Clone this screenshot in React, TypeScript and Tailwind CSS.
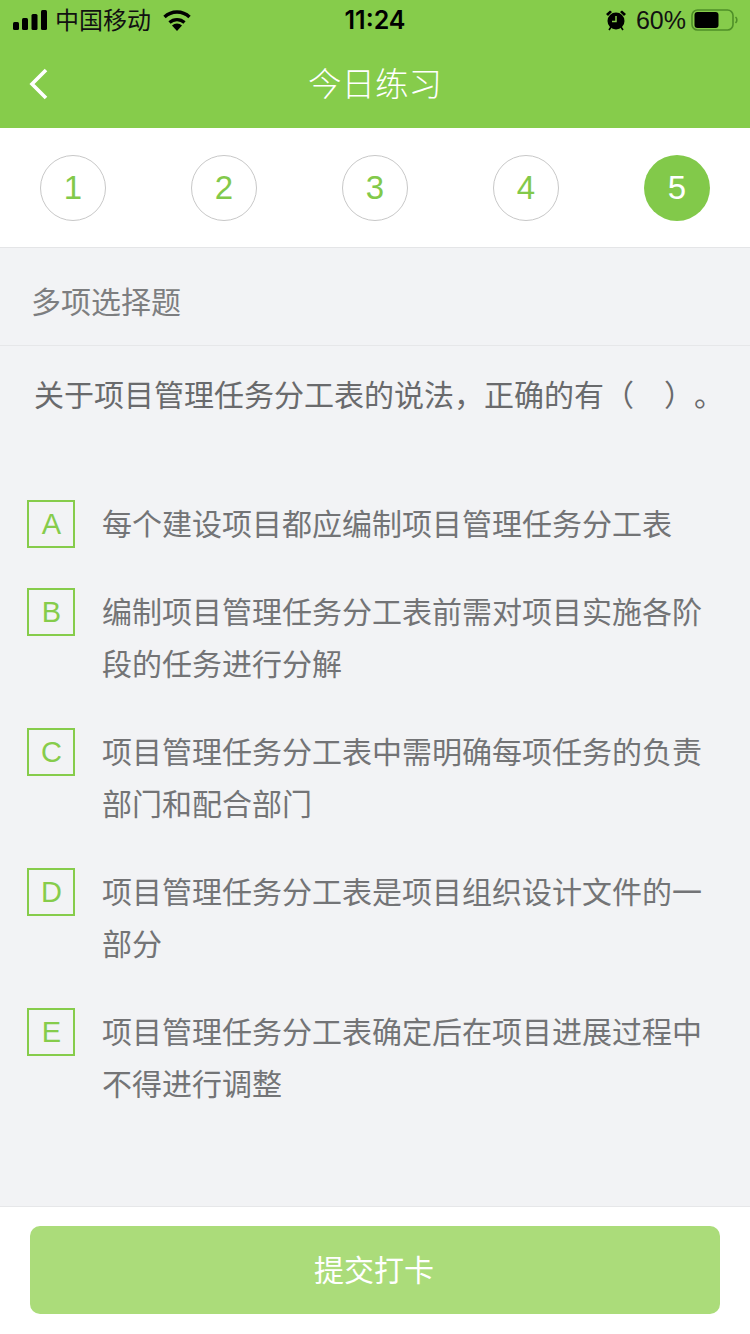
const font = { fontFamily: '"Noto Sans CJK SC", sans-serif' };

const steps = [1, 2, 3, 4, 5];

const options = [
  { key: 'A', lines: ['每个建设项目都应编制项目管理任务分工表'] },
  { key: 'B', lines: ['编制项目管理任务分工表前需对项目实施各阶', '段的任务进行分解'] },
  { key: 'C', lines: ['项目管理任务分工表中需明确每项任务的负责', '部门和配合部门'] },
  { key: 'D', lines: ['项目管理任务分工表是项目组织设计文件的一', '部分'] },
  { key: 'E', lines: ['项目管理任务分工表确定后在项目进展过程中', '不得进行调整'] },
];

function StatusBar() {
  return (
    <div className="h-10 flex items-center justify-between pl-[13px] pr-[12px] text-black relative">
      <div className="flex items-center">
        <svg width="34" height="20" viewBox="0 0 34 20">
          <rect x="0" y="12" width="6" height="8" rx="1.5" fill="#000" />
          <rect x="9" y="8" width="6" height="12" rx="1.5" fill="#000" />
          <rect x="18.5" y="4" width="6" height="16" rx="1.5" fill="#000" />
          <rect x="28" y="0" width="6" height="20" rx="1.5" fill="#000" />
        </svg>
        <span className="ml-[8px] text-[24px] leading-none text-[#111] -mt-[2px]">中国移动</span>
        <svg className="ml-[11px]" width="30" height="22" viewBox="0 0 30 22">
          <path d="M15 22 L10 16.5 A7.5 7.5 0 0 1 20 16.5 Z" fill="#000" />
          <path d="M7.5 13.5 A11 11 0 0 1 22.5 13.5" fill="none" stroke="#000" strokeWidth="3.2" />
          <path d="M2.5 8 A18 18 0 0 1 27.5 8" fill="none" stroke="#000" strokeWidth="3.4" />
        </svg>
      </div>
      <span
        className="absolute left-0 right-0 text-center text-[25px] font-semibold leading-none pointer-events-none"
        style={{ fontFamily: 'Inter, sans-serif' }}
      >
        11:24
      </span>
      <div className="flex items-center">
        <svg width="22" height="22" viewBox="0 0 22 22">
          <circle cx="11" cy="12" r="8.5" fill="#000" />
          <path d="M11 7 V12.5 H7" fill="none" stroke="#86cc4b" strokeWidth="1.5" />
          <path d="M1 5 L5 1.5 L7 3 L3 7 Z M21 5 L17 1.5 L15 3 L19 7 Z" fill="#000" />
          <path d="M4 21 L6 18 M18 21 L16 18" stroke="#000" strokeWidth="1.6" />
        </svg>
        <span className="ml-[9px] text-[25px] leading-none text-[#111]" style={{ fontFamily: '"Liberation Sans", sans-serif' }}>
          60%
        </span>
        <svg className="ml-[5px]" width="47" height="24" viewBox="0 0 47 24">
          <rect x="1" y="2" width="41" height="20" rx="5.5" fill="none" stroke="#4f8f28" strokeWidth="1.6" />
          <rect x="3.5" y="4" width="24" height="16" rx="3" fill="#000" />
          <path d="M44.5 9 A4 4 0 0 1 44.5 15" fill="none" stroke="#4f8f28" strokeWidth="1.6" />
        </svg>
      </div>
    </div>
  );
}

export default function App() {
  return (
    <div className="w-[750px] h-[1334px] flex flex-col bg-[#f2f3f5] overflow-hidden" style={font}>
      {/* Header */}
      <div className="h-32 bg-[#86cc4b] shrink-0">
        <StatusBar />
        <div className="h-[88px] flex items-center justify-center relative pb-[4px]">
          <svg className="absolute left-[29px] top-[28px]" width="20" height="32" viewBox="0 0 20 32">
            <path d="M17 2 L3 16 L17 30" fill="none" stroke="#fff" strokeWidth="3.6" />
          </svg>
          <span className="text-[33.5px] leading-none text-white font-light">今日练习</span>
        </div>
      </div>

      {/* Step circles */}
      <div className="h-[120px] shrink-0 bg-white border-b border-[#e4e5e7] flex items-start justify-between px-10 pt-[27px]">
        {steps.map((n) => (
          <div
            key={n}
            className={
              n === 5
                ? 'w-[66px] h-[66px] rounded-full bg-[#82c94a] text-white flex items-center justify-center text-[33px]'
                : 'w-[66px] h-[66px] rounded-full border border-[#c8c8c8] text-[#82c94a] flex items-center justify-center text-[33px]'
            }
            style={{ fontFamily: '"Liberation Sans", sans-serif' }}
          >
            {n}
          </div>
        ))}
      </div>

      {/* Question type */}
      <div className="h-[98px] shrink-0 border-b border-[#e6e7e9] flex items-center pl-[31px] pt-[6px] text-[30px] leading-none text-[#7d7e80]">
        多项选择题
      </div>

      {/* Stem */}
      <div className="pl-[34px] pt-[32px] text-[30px] leading-none text-[#696a6c] whitespace-nowrap [text-spacing-trim:space-all]">
        关于项目管理任务分工表的说法，正确的有（<span className="inline-block w-[30px]" />）。
      </div>

      {/* Options */}
      <div className="flex flex-col gap-9 pl-[27px] pt-[90px]">
        {options.map((o) => (
          <div key={o.key} className="flex items-start">
            <div
              className="w-[48px] h-[48px] mt-[2px] pl-[1px] shrink-0 border-2 border-[#86cc4b] flex items-center justify-center text-[#86cc4b] text-[29px] leading-none"
              style={{ fontFamily: '"Liberation Sans", sans-serif' }}
            >
              {o.key}
            </div>
            <div className="ml-[27px] -mt-[2px] mb-[2px] text-[30px] leading-[52px] text-[#737476] whitespace-nowrap">
              {o.lines.map((l) => (
                <div key={l}>{l}</div>
              ))}
            </div>
          </div>
        ))}
      </div>

      {/* Footer */}
      <div className="mt-auto h-[128px] shrink-0 bg-white border-t border-[#e6e7e9] px-[30px] pt-[19px]">
        <div className="h-[88px] rounded-[10px] bg-[#abdc7a] flex items-center justify-center text-[30px] text-white pb-[4px] pr-[2px]">
          提交打卡
        </div>
      </div>
    </div>
  );
}
